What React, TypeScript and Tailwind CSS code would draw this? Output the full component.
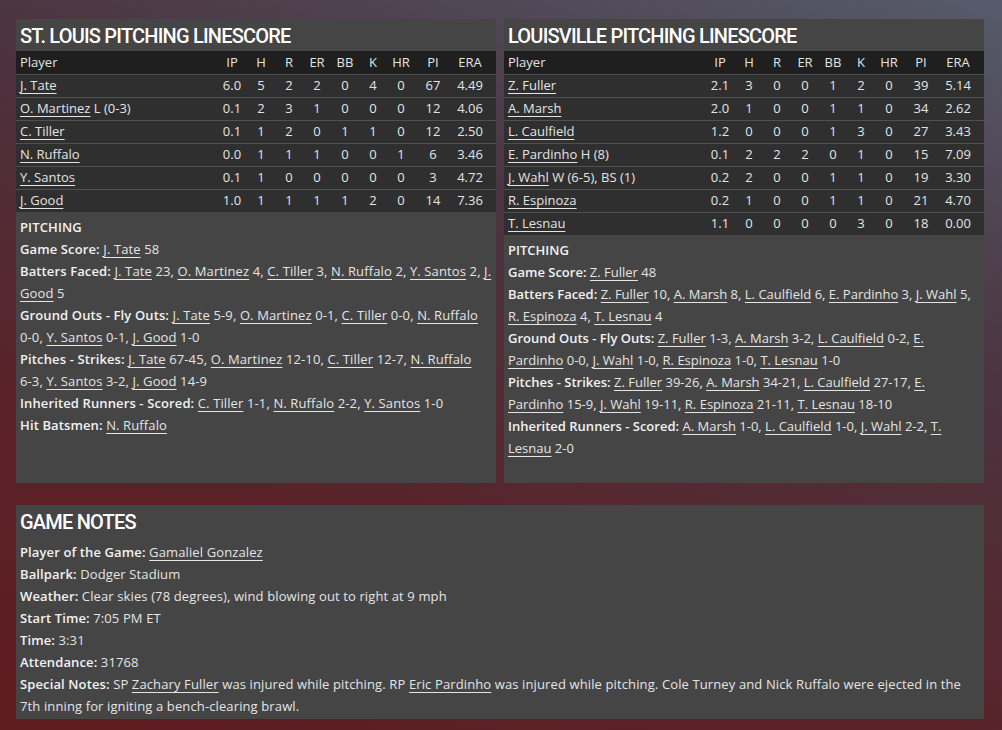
import React from "react";

type Row = { name: string; extra?: string; stats: string[] };
type Note = { label: string; items: [string, string][] };

const stLouisRows: Row[] = [
  { name: "J. Tate", stats: ["6.0", "5", "2", "2", "0", "4", "0", "67", "4.49"] },
  { name: "O. Martinez", extra: "L (0-3)", stats: ["0.1", "2", "3", "1", "0", "0", "0", "12", "4.06"] },
  { name: "C. Tiller", stats: ["0.1", "1", "2", "0", "1", "1", "0", "12", "2.50"] },
  { name: "N. Ruffalo", stats: ["0.0", "1", "1", "1", "0", "0", "1", "6", "3.46"] },
  { name: "Y. Santos", stats: ["0.1", "1", "0", "0", "0", "0", "0", "3", "4.72"] },
  { name: "J. Good", stats: ["1.0", "1", "1", "1", "1", "2", "0", "14", "7.36"] },
];

const louisvilleRows: Row[] = [
  { name: "Z. Fuller", stats: ["2.1", "3", "0", "0", "1", "2", "0", "39", "5.14"] },
  { name: "A. Marsh", stats: ["2.0", "1", "0", "0", "1", "1", "0", "34", "2.62"] },
  { name: "L. Caulfield", stats: ["1.2", "0", "0", "0", "1", "3", "0", "27", "3.43"] },
  { name: "E. Pardinho", extra: "H (8)", stats: ["0.1", "2", "2", "2", "0", "1", "0", "15", "7.09"] },
  { name: "J. Wahl", extra: "W (6-5), BS (1)", stats: ["0.2", "2", "0", "0", "1", "1", "0", "19", "3.30"] },
  { name: "R. Espinoza", stats: ["0.2", "1", "0", "0", "1", "1", "0", "21", "4.70"] },
  { name: "T. Lesnau", stats: ["1.1", "0", "0", "0", "0", "3", "0", "18", "0.00"] },
];

const stLouisNotes: Note[] = [
  { label: "Game Score:", items: [["J. Tate", "58"]] },
  {
    label: "Batters Faced:",
    items: [["J. Tate", "23"], ["O. Martinez", "4"], ["C. Tiller", "3"], ["N. Ruffalo", "2"], ["Y. Santos", "2"], ["J. Good", "5"]],
  },
  {
    label: "Ground Outs - Fly Outs:",
    items: [["J. Tate", "5-9"], ["O. Martinez", "0-1"], ["C. Tiller", "0-0"], ["N. Ruffalo", "0-0"], ["Y. Santos", "0-1"], ["J. Good", "1-0"]],
  },
  {
    label: "Pitches - Strikes:",
    items: [["J. Tate", "67-45"], ["O. Martinez", "12-10"], ["C. Tiller", "12-7"], ["N. Ruffalo", "6-3"], ["Y. Santos", "3-2"], ["J. Good", "14-9"]],
  },
  { label: "Inherited Runners - Scored:", items: [["C. Tiller", "1-1"], ["N. Ruffalo", "2-2"], ["Y. Santos", "1-0"]] },
  { label: "Hit Batsmen:", items: [["N. Ruffalo", ""]] },
];

const louisvilleNotes: Note[] = [
  { label: "Game Score:", items: [["Z. Fuller", "48"]] },
  {
    label: "Batters Faced:",
    items: [["Z. Fuller", "10"], ["A. Marsh", "8"], ["L. Caulfield", "6"], ["E. Pardinho", "3"], ["J. Wahl", "5"], ["R. Espinoza", "4"], ["T. Lesnau", "4"]],
  },
  {
    label: "Ground Outs - Fly Outs:",
    items: [["Z. Fuller", "1-3"], ["A. Marsh", "3-2"], ["L. Caulfield", "0-2"], ["E. Pardinho", "0-0"], ["J. Wahl", "1-0"], ["R. Espinoza", "1-0"], ["T. Lesnau", "1-0"]],
  },
  {
    label: "Pitches - Strikes:",
    items: [["Z. Fuller", "39-26"], ["A. Marsh", "34-21"], ["L. Caulfield", "27-17"], ["E. Pardinho", "15-9"], ["J. Wahl", "19-11"], ["R. Espinoza", "21-11"], ["T. Lesnau", "18-10"]],
  },
  { label: "Inherited Runners - Scored:", items: [["A. Marsh", "1-0"], ["L. Caulfield", "1-0"], ["J. Wahl", "2-2"], ["T. Lesnau", "2-0"]] },
];

const headers = ["IP", "H", "R", "ER", "BB", "K", "HR", "PI", "ERA"];

function Link({ children }: { children: React.ReactNode }) {
  return <span className="underline underline-offset-[3px] decoration-1 cursor-pointer">{children}</span>;
}

function NoteLine({ note }: { note: Note }) {
  return (
    <div className="leading-[22px]">
      <span className="font-semibold text-[#f2f2f2]">{note.label}</span>{" "}
      {note.items.map(([name, val], i) => (
        <React.Fragment key={i}>
          <Link>{name}</Link>
          {val ? " " : ""}
          <span className="whitespace-nowrap">
            {val}
            {i < note.items.length - 1 ? "," : ""}
          </span>
          {i < note.items.length - 1 ? " " : ""}
        </React.Fragment>
      ))}
    </div>
  );
}

function Title({ children }: { children: React.ReactNode }) {
  return (
    <div className="h-[32px] px-1 flex items-center pt-[1px] font-['Roboto',sans-serif] text-[20px] font-medium tracking-[-0.8px] text-white leading-none">
      {children}
    </div>
  );
}

function Panel({
  title,
  rows,
  notes,
  notesClass,
}: {
  title: string;
  rows: Row[];
  notes: Note[];
  notesClass: string;
}) {
  return (
    <div className="flex-1 h-[464px] bg-[#454545] flex flex-col">
      <Title>{title}</Title>
      <div className="text-[13px] text-[#e4e4e4]">
        <div className="grid grid-cols-[1fr_30px_28px_28px_28px_28px_28px_28px_36px_38px] pr-[7px] h-[23px] items-center bg-[#1f1f1f]">
          <div className="pl-1">Player</div>
          {headers.map((h) => (
            <div key={h} className="text-center">
              {h}
            </div>
          ))}
        </div>
        {rows.map((r) => (
          <div
            key={r.name}
            className="grid grid-cols-[1fr_30px_28px_28px_28px_28px_28px_28px_36px_38px] pr-[7px] h-[23px] items-center bg-[#2f2f2f] border-t border-[#505050]"
          >
            <div className="pl-1 whitespace-nowrap">
              <Link>{r.name}</Link>
              {r.extra ? ` ${r.extra}` : ""}
            </div>
            {r.stats.map((s, i) => (
              <div key={i} className="text-center">
                {s}
              </div>
            ))}
          </div>
        ))}
      </div>
      <div className={notesClass}>
        <div className="leading-[22px] font-semibold text-[#f2f2f2]">PITCHING</div>
        {notes.map((n, i) => (
          <NoteLine key={i} note={n} />
        ))}
      </div>
    </div>
  );
}

function Info({ label, children }: { label: string; children: React.ReactNode }) {
  return (
    <div className="leading-[22px]">
      <span className="font-semibold text-[#f2f2f2]">{label}</span> {children}
    </div>
  );
}

export default function App() {
  return (
    <div className="min-h-screen w-full bg-[linear-gradient(200deg,#565b6b_0%,#4b3440_35%,#5a2228_70%,#5e1c20_100%)] font-['Open_Sans',sans-serif] pt-[19px] pl-[16px] pb-[11px]">
      <div className="w-[968px] flex gap-2">
        <Panel
          title="ST. LOUIS PITCHING LINESCORE"
          rows={stLouisRows}
          notes={stLouisNotes}
          notesClass="px-1 pt-1 text-[13px] tracking-[0.12px] text-[#e4e4e4]"
        />
        <Panel
          title="LOUISVILLE PITCHING LINESCORE"
          rows={louisvilleRows}
          notes={louisvilleNotes}
          notesClass="px-1 pt-1 text-[13px] tracking-[0px] text-[#e4e4e4]"
        />
      </div>
      <div className="w-[968px] mt-[22px] bg-[#454545] pb-[2px]">
        <Title>GAME NOTES</Title>
        <div className="px-1 pt-1 text-[13px] tracking-[0.12px] text-[#e4e4e4]">
          <Info label="Player of the Game:">
            <Link>Gamaliel Gonzalez</Link>
          </Info>
          <Info label="Ballpark:">Dodger Stadium</Info>
          <Info label="Weather:">Clear skies (78 degrees), wind blowing out to right at 9 mph</Info>
          <Info label="Start Time:">7:05 PM ET</Info>
          <Info label="Time:">3:31</Info>
          <Info label="Attendance:">31768</Info>
          <Info label="Special Notes:">
            SP <Link>Zachary Fuller</Link> was injured while pitching. RP <Link>Eric Pardinho</Link> was injured while
            pitching. Cole Turney and Nick Ruffalo were ejected in the 7th inning for igniting a bench-clearing brawl.
          </Info>
        </div>
      </div>
    </div>
  );
}
